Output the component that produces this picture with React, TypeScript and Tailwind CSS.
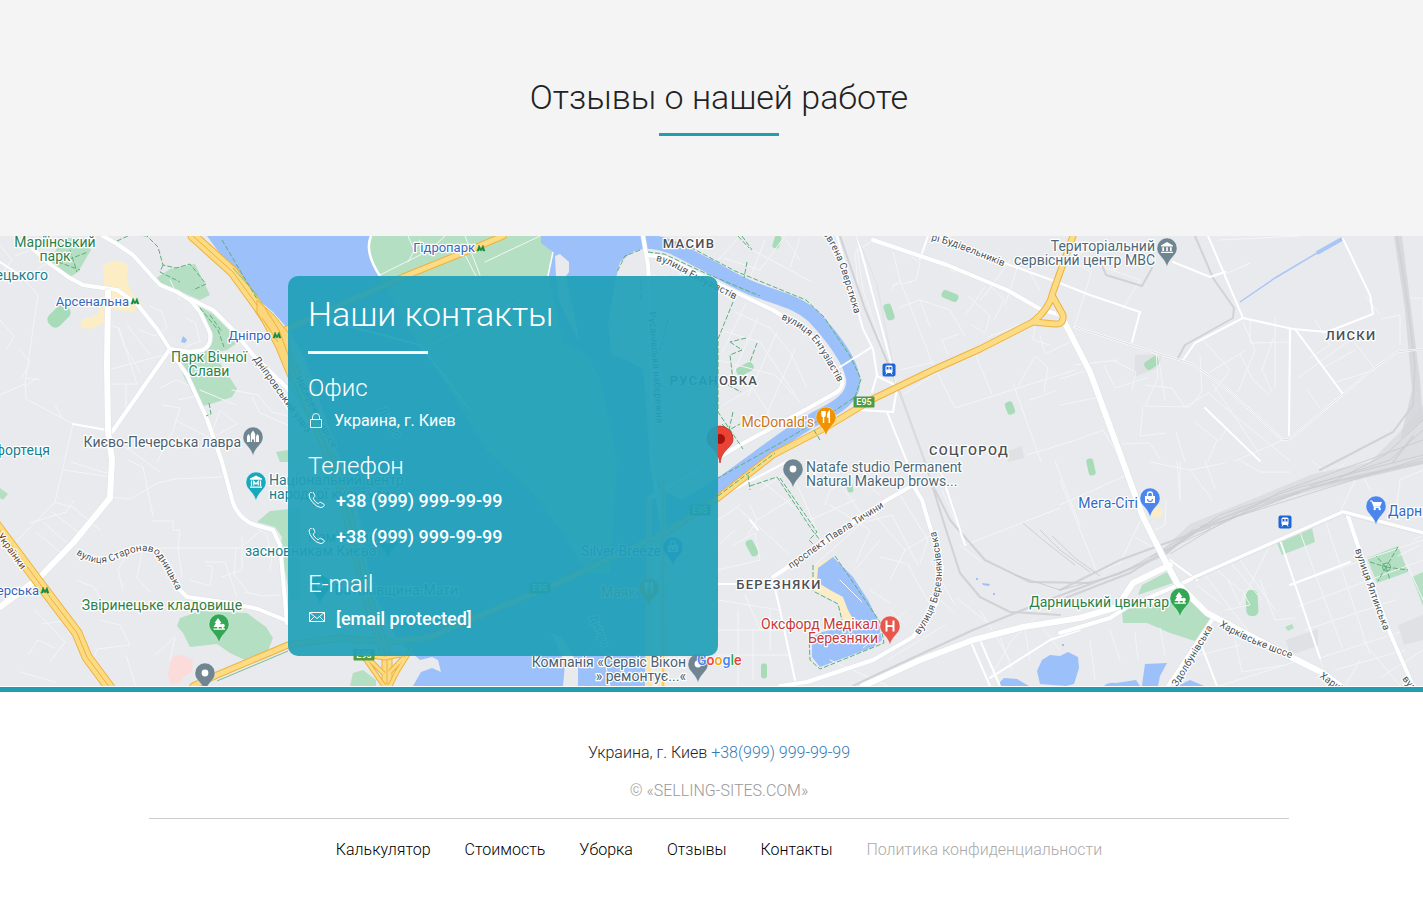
import type { ReactNode } from "react";

type Point = { x: number; y: number };

const water = [
  "M207 236L232 270L257 299L273 312L288 329L304 356L330 430L358 510L372 590L398 640L420 660L432 657L438 660L441 672L432 668L421 672L413 686H563L565 664L553 636L549 632L562 638L578 664L578 686H645L646 600L650 545L664 528L718 498L718 484L682 500L662 490L650 462L643 369L627 360L612 355L608 325L615 282L620 262L632 252L643 249L648 236Z",
];

const parks = [
  "M371 236Q364 252 380 276L408 329L428 355L465 415L485 449L533 493L563 533L587 573L610 573L617 460L607 412L600 379L587 355L563 342L548 275L553 252L541 243L541 236Z",
  "M50 262L62 238H84L91 250L78 272L70 277Z",
  "M155 279L170 269L195 264L210 295L200 300L177 290L160 285Z",
  "M197 305L213 314L240 341L227 350L213 353L230 378L237 389L232 397L217 402L200 407L183 375L177 358L200 352L211 341Z",
  "M180 618L200 611L247 613L266 627L273 638L267 653L247 661L230 653L217 644L190 647L183 633L177 626Z",
  "M257 522L270 511L300 508V600H290L286 575L280 550L282 537L275 527Z",
  "M350 686L353 673L363 670L376 680V686Z",
  "M276 452L288 450V462H280Z",
  "M0 488L8 494L3 500L0 498Z",
  "M1122 610L1167 602L1190 600L1213 615L1198 642L1170 633L1147 623L1123 623Z",
  "M1142 585L1167 572L1173 583L1138 595Z",
  "M1277 543L1312 528L1315 542L1282 555Z",
  "M1367 558L1398 546L1408 572L1377 583Z",
  "M1412 577L1423 572V606Z",
  "M1285 627L1292 624L1294 628L1288 631Z",
];

const pills: { x: number; y: number; w: number; h: number; r: number }[] = [
  { x: 59, y: 316, w: 25, h: 15, r: -45 },
  { x: 777, y: 242, w: 7, h: 13, r: 18 },
  { x: 889, y: 312, w: 8, h: 17, r: -18 },
  { x: 950, y: 296, w: 17, h: 8, r: 22 },
  { x: 1010, y: 408, w: 8, h: 13, r: -20 },
  { x: 1152, y: 363, w: 16, h: 9, r: -35 },
  { x: 1091, y: 467, w: 7, h: 17, r: -12 },
  { x: 1252, y: 603, w: 12, h: 26, r: -3 },
  { x: 745, y: 369, w: 18, h: 9, r: -28 },
  { x: 752, y: 548, w: 8, h: 17, r: -28 },
  { x: 764, y: 671, w: 6, h: 15, r: 0 },
  { x: 850, y: 488, w: 6, h: 9, r: -10 },
];

const ponds = [
  "M833 557L818 568L817 582L830 590L843 597L848 610L855 623L840 628L822 632L812 637L812 657L820 667L873 647L882 640L878 620L868 600L853 577Z",
  "M1037 671L1042 660L1050 655L1060 656L1068 652L1078 657L1079 668L1074 684L1066 686L1040 684Z",
  "M1000 682L1004 678L1017 679L1029 686H1000Z",
  "M1143 678L1145 664L1167 663L1160 676L1158 686H1142Z",
  "M1104 686Q1108 682 1116 683L1136 680L1140 686Z",
  "M1177 686L1190 680L1204 686Z",
  "M976 578h2v2h-2zM982 583l8 1-1 2-6-1zM993 593h2v2h-2zM1062 644h2v2h-2zM183 336l4 4-2 3-4-1z",
];

const beigeAreas = [
  "M103 265L117 260L128 265L127 282L133 295L143 304L133 312L110 309L107 322L90 329L80 327L82 320L97 315L103 299L104 282Z",
  "M833 557L815 566L813 590L838 602L842 618L848 624L857 622L848 597L830 585L818 575Z",
  "M1150 508L1162 508V516L1152 518Z",
];

const blocks = [
  "M1135 355L1162 354L1158 368L1134 377Z",
  "M1286 640L1318 629L1318 646L1290 655Z",
  "M1398 625L1423 615V640L1404 645Z",
  "M1005 452L1022 446L1024 458L1008 462Z",
];

const canal =
  "M641 242C670 240 690 258 707 265C724 274 742 286 762 292C780 299 797 302 813 316C831 335 850 360 853 378C855 392 846 403 824 414C790 431 755 461 718 486L675 512";

const minorStreets = [
  "M0 262L20 275L38 295L25 384L0 395M25 384L26 399L73 424L107 430M73 424L55 502L13 545M107 384H137L119 328L109 325M108 370L167 354M126 384V407M0 320L14 336L6 350",
  "M0 245L12 260L0 276M15 256L33 249M38 268L50 262M20 350L30 362L22 378M25 378L40 380M26 386L36 378M55 405L62 418M118 328L124 345L140 372M127 325L150 355",
  "M139 330L155 336L167 328L162 312L150 306M170 280L180 300M186 318L195 322L200 341L185 347M160 388L176 380L190 386M162 405L180 408L173 431L157 462M178 400L196 396L200 405",
  "M63 470L112 477M71 462L112 475M55 502L74 508L100 530M74 500L66 512L30 523M36 532L60 552M44 523L67 543M52 512L82 535M112 497L130 499L158 483L175 479L222 477",
  "M128 460L143 467L153 516M153 521H173V530H180L178 548L182 577M150 548L240 548L264 528M190 580L210 586L213 567L207 565M205 562L225 562L237 597M236 548L234 575L250 594",
  "M242 518L266 534L272 555L270 570M280 595L262 596L245 592M242 537V570L222 577M130 548L118 570L123 590M142 552L137 578L150 592M76 580L94 587L105 608",
  "M35 610L65 642L50 662M20 672L55 682M28 655L38 640L55 648M100 620L120 625L130 645L97 649L92 665M126 655L137 690M155 655L175 637L170 660M42 624L64 621L70 635",
  "M175 420L210 438L220 410L237 424L215 436M232 390L258 395L272 412L288 416M252 397L260 413L288 425M200 390L236 405M0 452L28 459M110 440L130 450L160 472",
  "M652 275L718 292M655 295L718 310M656 325L718 335M655 345L718 352M655 400L718 395M665 275V480M680 270V484M697 278V480M652 450H718",
  "M735 312L770 328L790 352L806 386M720 330L760 342L795 395M718 360L775 375L800 402M723 405L753 388L770 415M745 305L722 353M758 318L732 376M777 332L748 396M795 350L765 418",
  "M724 258L760 270L785 236M740 236L718 260M765 240L750 278M786 240L800 260M745 246L812 282M800 238L790 268",
  "M857 248L863 290L885 355M874 240L855 252L858 285M893 252L900 280L935 370M900 280L890 290M893 285L912 282M899 308L920 300L930 327M910 255L920 263L916 280L908 282M920 300L950 310L965 336",
  "M900 370L934 362M904 394L937 372L955 408L1075 370M1013 383L1041 462M975 353L992 394M1018 386L1035 356L1048 367L1044 392M965 315L985 287M948 355L942 340L959 334M985 280L1004 300L994 320",
  "M968 296L990 316L985 333L972 325M950 270L995 283L980 300M1010 260L985 295M1018 265L1005 305M988 337L1028 322M1030 273L1040 290M1017 266L1045 278M1037 312L1033 340L1050 345",
  "M1027 455L1076 440L1103 430L1123 462M1030 400L1055 391M1040 335L1045 354L1070 342M1075 365L1118 360M1060 379L1092 369M1060 405L1100 397M1104 365L1115 388L1147 378M1113 360L1136 372L1132 390",
  "M1092 270L1075 325M1100 266L1140 280L1122 310M1090 242L1075 262L1090 272M1156 352L1158 378L1145 406L1190 407L1202 391L1200 355M1143 407L1140 436L1165 433M1145 385L1172 388L1185 407L1210 392",
  "M1158 354L1165 400M1210 395L1290 461M1283 440L1235 461M1213 384L1260 455M1196 423L1217 440L1208 461M1205 408L1227 428L1220 440M1176 432L1185 462M1123 444L1150 443L1160 459",
  "M1243 322L1255 350L1238 392M1250 318V343L1290 342M1203 340L1230 370L1214 392M1240 354L1253 380L1270 395M1273 339L1262 370L1272 392M1245 351L1210 372M1275 388L1275 318",
  "M1310 358L1330 345M1298 378L1350 340M1323 368L1355 350M1333 383L1375 370M1307 390L1320 408M1355 343L1375 369M1315 320L1330 345M1381 319L1400 315V345M1410 298H1423V320",
  "M1220 240L1300 236M1225 274L1250 263L1240 268M1365 296L1380 314M1150 462L1190 470L1225 463M1240 460L1260 472H1290M1312 461L1330 475L1345 463M1060 505L1127 475M1177 461L1180 500",
  "M1060 480L1097 572L1120 563L1143 515M1135 537L1162 553M1166 500L1165 525L1155 530M1180 462V500M1205 461L1215 488M1190 470L1212 500",
  "M750 505L757 520L748 535M760 490L790 470L804 500L825 550M757 520L790 500M733 545L755 533L760 560M738 508L790 555M748 470L810 520L855 500M825 505L830 490L855 475L880 495",
  "M830 505L870 530L856 562M845 490L865 520L815 565M870 510L905 550L890 580M905 550L940 530M913 485L900 495L928 540L920 563M907 563L930 605M880 540L855 570M905 563L880 557M865 522L892 515L918 565",
  "M718 520L740 505M718 545L735 530M718 570L760 560M718 600L780 610M738 610V686M718 630H782M718 655H788M753 630V680M770 610V650M745 595L760 630",
  "M942 490L965 545L1060 508M960 545L982 562M1055 461L1080 525M930 560L955 605M940 600L953 612M957 598L990 625M980 610L1010 660M1025 630L1030 660M1000 637L1012 670M1040 625L1060 650",
  "M990 678L1012 640L1035 618M888 660L945 625M863 648L905 612M840 580L862 602M870 590L890 603M890 610L906 625M830 660L888 686",
  "M1280 540L1323 668M1300 532L1342 647M1325 520L1370 655M1290 585L1423 540M1297 607L1423 560M1305 630L1395 600M1320 658L1400 632M1335 670L1405 650",
  "M1205 575L1255 640M1230 562L1262 600M1217 570L1240 590M1240 560L1275 610M1270 545L1240 605L1228 580M1225 610L1250 605L1242 590M1197 585L1220 603M1260 580L1275 620L1295 618",
  "M1340 512L1360 470L1370 490M1395 520L1400 480L1423 470M1405 560L1423 600M1413 540L1423 535M1362 640L1400 686M1380 678L1423 650M1360 660L1345 686M1220 686L1300 660",
  "M1160 628L1165 655M1090 640L1095 680M1110 630L1120 660M1135 633L1138 660M1200 655L1240 645M1235 640L1242 672L1285 665M1420 545L1398 556",
  "M380 275L430 250L445 236M408 262L420 240M408 236L415 252M465 236L480 275M485 262L540 236M463 251L478 280M610 686L605 662M520 300L480 320L430 345",
];

const midStreets = [
  "M0 262L20 275M73 424L107 430M325 320L420 345L470 410M837 236L863 329L873 349L877 375L872 392M857 236L897 385M872 347L840 367",
  "M937 236L1007 264L1057 282L1090 295L1140 312L1132 342M928 236L920 259M1208 236L1243 318L1293 329L1327 332L1373 314L1370 295L1343 239M1243 318L1195 343L1183 360",
  "M1290 329L1289 435M1295 329L1343 394M1075 327L1160 354L1193 364L1227 389L1283 440L1290 439L1373 369L1397 352L1423 349M1173 262L1210 277L1225 272",
  "M773 580L780 610L795 680M887 412L907 462L913 485M860 410L893 412M877 376L893 384M893 412L897 388M942 475L965 545M718 584H740M1202 647L1217 686M970 640L990 686M980 640L1000 686",
  "M990 678L1050 640L1080 630M1347 513L1423 533M1342 513L1280 540L1193 578M1197 580L1170 560M718 498L790 460M750 520L758 530",
  "M1280 540L1320 658M1290 585L1350 562M1205 408L1260 461",
];

const majorRoads = [
  "M33 249L50 264L68 277L83 285L117 290L137 304L157 329L170 349L190 352L203 350Q212 345 210 333L200 312L190 300L177 292L160 285L150 274L133 255L117 244L103 236",
  "M190 299L213 310L233 330L253 355L288 389L325 450",
  "M170 350L187 375L207 419L222 462L233 503Q240 520 255 525L273 530L280 545L287 623",
  "M170 349L112 432",
  "M643 236L648 265L650 299L652 462L665 540L662 686",
  "M647 255L665 257L700 275L760 304L773 310L807 332L827 355L842 377Q844 387 837 392L807 409L740 445L650 498",
  "M177 587L187 597L230 603L258 609L290 622",
  "M773 577L813 550L887 500L913 485L922 500L930 527L942 567L937 603L913 637L873 660L807 682L780 686",
  "M873 240L947 265L1007 290L1040 309L1060 315",
  "M1060 633L1110 618L1127 607L1183 583L1193 578L1343 512L1423 533",
  "M1347 513L1357 543L1390 633L1413 686",
  "M1212 620L1168 686",
];

const trunkRoads = [
  "M108 292L107 365L108 432L112 460L110 498L73 543L40 577L0 607",
  "M1060 313L1073 339L1090 372L1123 462L1143 517L1163 557L1177 583L1207 613L1220 620L1293 658L1323 673L1340 686",
  "M1170 565L1133 583L1117 607L1080 618L1023 627L973 640L920 660L863 686",
];

const highways = [
  "M1073 236L1053 292Q1050 308 1033 322L980 349L933 370L873 399L823 429L773 455L718 498L667 532L600 563L550 587L500 607L430 637L388 642L340 638L288 645L217 675L193 686",
  "M1053 297L1063 315Q1064 325 1055 324L1033 322",
  "M503 236L465 252L408 275L340 305L285 330",
];

const wideHighways = [
  "M193 236L233 272L257 305L273 329L295 373L340 480L365 590L387 660L387 686",
  "M-4 525L37 580L77 633L87 657L110 688",
];

const railways = [
  "M840 236L865 309L897 385L925 462L947 533L960 573L980 597L1010 612L1060 615",
  "M930 480L950 520L985 560L1030 582L1093 583",
  "M853 686L880 673L973 630L1030 607L1093 583L1127 570L1167 553L1193 530L1260 503L1313 487L1423 463",
  "M1060 590L1120 560L1210 527M1060 600L1130 573L1200 530L1300 492M1397 236L1407 299L1415 365L1413 405L1393 432L1320 470",
  "M1195 236L1213 278L1234 308L1233 318L1185 345L1178 358M1102 265L1106 275L1142 286L1152 268M1413 436L1393 462",
];

const trails = [
  "M117 241L130 235L147 236L158 247L163 265L176 268L190 264L206 284L193 290M163 265L160 272L180 282M58 262L80 270M70 250L77 272M62 262L88 252",
  "M200 308L218 330L224 347M210 315L222 332M209 403L211 414L206 416M222 240L257 299",
  "M640 250L625 256L617 272M648 252L664 254L705 273L760 296M664 239L690 247L735 271L806 300L824 317L850 356L861 379L855 397L836 410L775 446L718 478",
  "M733 302L718 339V412L743 449M730 342L742 350L730 355L733 380M746 338L730 342M728 385L741 392M757 343L750 362M733 412L729 430L740 424M722 424L733 436",
  "M750 486L777 477L812 530L820 540M780 478L817 532L809 540L815 546M718 496L775 453M748 475L750 490",
  "M835 556L848 575L880 622L884 643L820 669L810 660L809 637M813 565V591L838 604L842 620M738 236L749 248M747 262L744 278M742 236L752 250M814 430L820 440",
  "M1370 562L1386 567L1398 547M1386 567L1378 581M1386 567L1408 570M1386 567L1390 580M1386 567L1376 556",
  "M641 280V300M668 320L660 350",
];

type Label = Point & {
  text: string;
  tone: string;
  end?: boolean;
  middle?: boolean;
};

const transitLabels: Label[] = [
  { text: "Арсенальна", x: 129, y: 306, tone: "fill-[#3468bd]", end: true },
  { text: "Дніпро", x: 271, y: 340, tone: "fill-[#3468bd]", end: true },
  { text: "Гідропарк", x: 475, y: 252, tone: "fill-[#3468bd]", end: true },
  { text: "ерська", x: 39, y: 595, tone: "fill-[#3468bd]", end: true },
];

const labels: Label[] = [
  { text: "Маріїнський", x: 55, y: 247, tone: "fill-[#2b8149]", middle: true },
  { text: "парк", x: 55, y: 261, tone: "fill-[#2b8149]", middle: true },
  { text: "ецького", x: 48, y: 280, tone: "fill-[#15808f]", end: true },
  { text: "Парк Вічної", x: 209, y: 362, tone: "fill-[#2b8149]", middle: true },
  { text: "Слави", x: 209, y: 376, tone: "fill-[#2b8149]", middle: true },
  { text: "Києво-Печерська лавра", x: 241, y: 447, tone: "fill-[#4d6170]", end: true },
  { text: "фортеця", x: 50, y: 455, tone: "fill-[#15808f]", end: true },
  { text: "Національний центр", x: 269, y: 485, tone: "fill-[#15808f]" },
  { text: "народної культури", x: 269, y: 499, tone: "fill-[#15808f]" },
  { text: "Пам'ятник", x: 308, y: 542, tone: "fill-[#15808f]" },
  { text: "засновникам Києва", x: 245, y: 556, tone: "fill-[#15808f]" },
  { text: "Батьківщина-Мати", x: 458, y: 595, tone: "fill-[#15808f]", end: true },
  { text: "Звіринецьке кладовище", x: 162, y: 610, tone: "fill-[#2b8149]", middle: true },
  { text: "Silver Breeze", x: 661, y: 556, tone: "fill-[#3468bd]", end: true },
  { text: "Маяк", x: 636, y: 597, tone: "fill-[#c26c12]", end: true },
  { text: "Компанія «Сервіс Вікон", x: 686, y: 667, tone: "fill-[#4d6170]", end: true },
  { text: "» ремонтує...«", x: 686, y: 681, tone: "fill-[#4d6170]", end: true },
  { text: "McDonald's", x: 814, y: 427, tone: "fill-[#c8751d]", end: true },
  { text: "Natafe studio Permanent", x: 806, y: 472, tone: "fill-[#4d6978]" },
  { text: "Natural Makeup brows...", x: 806, y: 486, tone: "fill-[#4d6978]" },
  { text: "Територіальний", x: 1155, y: 251, tone: "fill-[#4d6978]", end: true },
  { text: "сервісний центр МВС", x: 1155, y: 265, tone: "fill-[#4d6978]", end: true },
  { text: "Мега-Сіті", x: 1138, y: 508, tone: "fill-[#3569c4]", end: true },
  { text: "Дарниця", x: 1388, y: 516, tone: "fill-[#3569c4]" },
  { text: "Оксфорд Медікал", x: 878, y: 629, tone: "fill-[#c53a3a]", end: true },
  { text: "Березняки", x: 878, y: 643, tone: "fill-[#c53a3a]", end: true },
  { text: "Дарницький цвинтар", x: 1169, y: 607, tone: "fill-[#2b8149]", end: true },
];

const districts: (Point & { text: string })[] = [
  { text: "МАСИВ", x: 689, y: 248 },
  { text: "РУСАНОВКА", x: 714, y: 385 },
  { text: "СОЦГОРОД", x: 969, y: 455 },
  { text: "БЕРЕЗНЯКИ", x: 779, y: 589 },
  { text: "ЛИСКИ", x: 1351, y: 340 },
];

const streetNames: { id: string; text: string; d: string; tone?: string }[] = [
  { id: "entuziastiv-north", text: "вулиця Ентузіастів", d: "M656 261Q668 263 690 277L750 307" },
  { id: "entuziastiv-east", text: "вулиця Ентузіастів", d: "M781 319Q806 329 817 346L850 402" },
  { id: "sverstiuka", text: "Євгена Сверстюка", d: "M822 233Q835 250 842 273L861 335" },
  { id: "budivelnykiv", text: "рі Будівельників", d: "M931 240L950 245L1025 275" },
  { id: "tychyny", text: "проспект Павла Тичини", d: "M791 569L835 538L900 497" },
  { id: "berezniakivska", text: "вулиця Березняківська", d: "M919 635Q942 605 942 570Q940 545 932 515" },
  { id: "staronavodnytska", text: "вулиця Старонаводницька", d: "M76 554Q95 568 115 560Q145 545 156 555Q166 568 182 602" },
  { id: "ukrainky", text: "Українки", d: "M-3 536L40 596", tone: "fill-[#6b4226]" },
  { id: "dniprovskyi", text: "Дніпровський узвіз", d: "M253 359L340 481" },
  { id: "naberezhne", text: "Набережне шосе", d: "M295 378L346 476" },
  { id: "rusanivska", text: "Русанівська набережна", d: "M649 312L658 440" },
  { id: "yaltynska", text: "вулиця Ялтинська", d: "M1355 550Q1364 578 1388 642" },
  { id: "kharkivske", text: "Харківське шосе", d: "M1219 626Q1245 643 1305 663" },
  { id: "kharkivske-south", text: "Харківське шосе", d: "M1319 677L1390 729" },
  { id: "yaltynska-south", text: "вулиця", d: "M1402 679L1430 715" },
  { id: "zdolbunivska", text: "Здолбунівська", d: "M1177 687L1222 613" },
  { id: "dnipro-river-north", text: "Дніпро", d: "M379 410L403 450", tone: "fill-[#3a66b0]" },
  { id: "dnipro-river-south", text: "Дніпро", d: "M590 617L610 664", tone: "fill-[#3a66b0]" },
];

function Pin({ x, y, fill, children }: Point & { fill: string; children?: ReactNode }) {
  return (
    <g transform={`translate(${x} ${y})`}>
      <path
        d="M0 19C-1.500 13-4.500 10.500-7.500 6.800C-9.200 4.700-10 2.500-10 0A10 10 0 1 1 10 0C10 2.500 9.200 4.700 7.500 6.800C4.500 10.500 1.500 13 0 19Z"
        className={`${fill} stroke-white/60`}
        strokeWidth=".6"
      />
      {children ?? <circle r="3.400" className="fill-white" />}
    </g>
  );
}

const Tree = () => (
  <g className="fill-white">
    <path d="M-1-6L-4.500-1H-3L-5.500 3H-1.700V5H-.3V3H3.300L1-1H2.500Z" />
    <path d="M3 5V3.500A2 2 0 1 1 4.500 3.500V5ZM-5.500 4.500H6V5.700H-5.500Z" />
  </g>
);
const Fork = () => (
  <g className="stroke-white" strokeWidth="1.500" fill="none">
    <path d="M-4-6V-2Q-4-.5-2.500-.5T-1-2V-6M-2.500-6V6M3.300 6V-5.500Q1.500-4 1.700 0H3.300" />
  </g>
);
const Bank = () => (
  <g className="fill-white">
    <path d="M0-6L6-2.500V-1.500H-6V-2.500ZM-4.700-.7h1.700v3.700h-1.700zM-.8-.7H.8V3H-.8zM3-.7h1.700v3.700H3zM-6 3.700H6V5H-6Z" />
  </g>
);
const Museum = () => (
  <g className="fill-white">
    <path d="M0-6.500L6-3.500V-2.300H-6V-3.500ZM-6 4.500H6V5.700H-6Z" />
    <path d="M-4.500-1.500V4M4.500-1.500V4M-2.200 3.500V-.5L0 2L2.200-.5V3.500" fill="none" className="stroke-white" strokeWidth="1.300" />
  </g>
);
const Bag = () => (
  <g>
    <path d="M-5-2H5V5H-5Z" className="fill-white" />
    <path d="M-2.500-2V-3.500A2.500 2.500 0 0 1 2.500-3.500V-2" fill="none" className="stroke-white" strokeWidth="1.300" />
    <path d="M-2.500 1A2.500 2.500 0 0 0 2.500 1" fill="none" className="stroke-[#4a86ee]" strokeWidth="1.200" />
  </g>
);
const Cart = () => (
  <g>
    <path d="M-6-5H-4L-1.500 1.500H4" fill="none" className="stroke-white" strokeWidth="1.200" />
    <path d="M-3.700-4H6L4 .8H-2ZM-2.500 3a1.200 1.200 0 1 0 2.400 0 1.200 1.200 0 1 0-2.400 0M2.500 3a1.200 1.200 0 1 0 2.400 0 1.200 1.200 0 1 0-2.400 0" className="fill-white" />
  </g>
);
const Domes = () => (
  <path d="M-6 5V0Q-6-1.500-4.500-3Q-3-1.500-3 0V5ZM-2.200 5V-2.500Q-2-4 0-6.500Q2-4 2.200-2.500V5H1V2.500H-1V5ZM3 5V0Q3-1.500 4.500-3Q6-1.500 6 0V5Z" className="fill-white" />
);

function Metro({ x, y }: Point) {
  return <path transform={`translate(${x} ${y})`} d="M-4 3L-2-3L0 1L2-3L4 3H2L1.500 1L0 3.200L-1.500 1L-2 3Z" className="fill-[#138a43] stroke-[#138a43]" strokeWidth=".4" />;
}

function Station({ x, y }: Point) {
  return (
    <g transform={`translate(${x} ${y})`}>
      <rect x="-6.500" y="-6.500" width="13" height="13" rx="2" className="fill-[#1f66d6]" />
      <rect x="-3.500" y="-4.500" width="7" height="7.500" rx="1.500" className="fill-white" />
      <path d="M-2.500-3H-.5V-.5H-2.500ZM.5-3H2.500V-.5H.5Z" className="fill-[#1f66d6]" />
      <path d="M-2 3L-3.200 4.500M2 3L3.200 4.500" className="stroke-white" />
    </g>
  );
}

function Shield({ x, y }: Point) {
  return (
    <g transform={`translate(${x} ${y})`}>
      <rect x="-10.500" y="-5.500" width="21" height="11" rx="1" className="fill-[#4f9b3d]" />
      <text y="3" textAnchor="middle" className="fill-white text-[9px] font-medium">E95</text>
    </g>
  );
}

function Roads({ paths, className, width }: { paths: string[]; className: string; width: number }) {
  return (
    <g fill="none" strokeLinejoin="round" strokeLinecap="round" className={className} strokeWidth={width}>
      {paths.map((d) => (
        <path key={d} d={d} />
      ))}
    </g>
  );
}

function MapLabel({ label, size }: { label: Label; size: string }) {
  return (
    <text x={label.x} y={label.y} textAnchor={label.end ? "end" : label.middle ? "middle" : "start"} className={`${size} ${label.tone}`}>
      {label.text}
    </text>
  );
}

function CityMap() {
  return (
    <svg
      viewBox="0 236 1423 450"
      preserveAspectRatio="xMidYMid slice"
      role="img"
      aria-label="Карта"
      className="col-start-1 row-start-1 h-[450px] w-full bg-[#e8eaed]"
    >
      <g className="fill-[#dfe1e5]">{blocks.map((d) => <path key={d} d={d} />)}</g>
      <g className="fill-[#9cc0f9]">{water.map((d) => <path key={d} d={d} />)}</g>
      <path d="M555 256L560 254L569 262L569 272L566 276L572 305L580 342L570 325L559 300L556 278Z" className="fill-[#e8eaed]" />
      <path d={canal} fill="none" className="stroke-[#9cc0f9]" strokeWidth="14" />
      <g className="fill-[#b5dfc3]">
        {parks.map((d) => <path key={d} d={d} />)}
      </g>
      <path d="M371 236Q364 252 380 276" fill="none" className="stroke-white" strokeWidth="2.500" />
      <path d="M553 252L548 276" fill="none" className="stroke-white" strokeWidth="1.500" />
      <g className="fill-[#a8dbb8]">
        {pills.map((p) => (
          <rect key={`${p.x}-${p.y}`} x={p.x - p.w / 2} y={p.y - p.h / 2} width={p.w} height={p.h} rx={Math.min(p.w, p.h) / 2.5} transform={`rotate(${p.r} ${p.x} ${p.y})`} />
        ))}
      </g>
      <g className="fill-[#fdedc4]">{beigeAreas.map((d) => <path key={d} d={d} />)}</g>
      <path d="M170 663L174 656L182 655L193 660L192 672L183 677L180 683L170 684L168 674Z" className="fill-[#fbdcdb]" />
      <g className="fill-[#9cc0f9]">{ponds.map((d) => <path key={d} d={d} />)}</g>
      <path d="M1240 302L1275 278L1317 253L1342 239" fill="none" className="stroke-[#a8c7f7]" strokeWidth="1.500" />
      <path d="M1317 253L1342 239" className="stroke-[#a8c7f7]" strokeWidth="4" />

      <Roads paths={minorStreets} className="stroke-[#f4f5f7]" width={1} />
      <path d="M1060 603L1127 572L1162 550L1190 524L1260 496L1313 474L1370 462L1400 432L1423 405V464L1340 484L1260 504L1195 532L1165 556L1095 586Z" className="fill-[#d3d5d9]/60" />
      <path d="M1394 236H1402L1410 300L1420 380L1423 420L1400 440L1412 390L1405 310Z" className="fill-[#d3d5d9]/80" />
      <Roads paths={railways} className="stroke-[#d0d2d6]" width={2} />
      <g fill="none" className="stroke-[#c6c9cd]" strokeWidth=".8">
        <path d="M1167 551L1220 515L1300 487L1423 455M1170 554L1240 512L1330 482L1423 461M1120 574L1200 528L1423 458M1150 557L1230 520L1280 492L1340 470L1423 440M1330 483L1385 455L1423 420M1310 486L1390 460L1423 430" />
        <path d="M1023 523L1043 540L1075 565M1040 530L1060 550L1090 572M1052 536L1075 558L1100 576M1015 575L1060 590L1120 574" />
      </g>
      <Roads paths={midStreets} className="stroke-white" width={2} />
      <Roads paths={majorRoads} className="stroke-[#dfe1e5]" width={5} />
      <Roads paths={majorRoads} className="stroke-white" width={4} />
      <Roads paths={trunkRoads} className="stroke-[#dfe1e5]" width={7} />
      <Roads paths={trunkRoads} className="stroke-white" width={6} />
      <path d="M1075 327L1160 354L1193 364L1227 389L1283 440L1290 439L1373 369L1397 352L1423 349" fill="none" className="stroke-[#cfd2d6]" strokeWidth=".8" />
      <g fill="none" className="stroke-[#dfe1e5]" strokeWidth="1">
        <path d="M1193 580L1343 514L1423 535M1193 529L1200 527M857 236L877 285L897 385L935 490" />
      </g>

      <Roads paths={highways} className="stroke-[#f0b13c]" width={7} />
      <Roads paths={wideHighways} className="stroke-[#f0b13c]" width={11} />
      <Roads paths={highways} className="stroke-[#fbdc84]" width={5} />
      <Roads paths={wideHighways} className="stroke-[#fbdc84]" width={9} />
      <Roads paths={wideHighways} className="stroke-[#f0b13c]" width={1} />
      <g fill="none" strokeLinejoin="round">
        <path d="M257 300L274 315L290 335V382L276 348L257 312Z" className="fill-[#fbd67a] stroke-[#f0b13c]" />
        <path d="M265 308L279 330L290 360M262 318L278 342" className="stroke-[#f0b13c]" />
        <path d="M352 648L366 660L384 686H390L397 672L412 648M372 656L385 658L400 655M368 658L384 674M404 657L390 672" className="stroke-[#f0b13c]" strokeWidth="5" />
        <path d="M352 648L366 660L384 686H390L397 672L412 648M372 656L385 658L400 655M368 658L384 674M404 657L390 672" className="stroke-[#fbdc84]" strokeWidth="3" />
        <path d="M649 500V686M663 480V686" className="stroke-[#fbe3a0]" strokeWidth="5" />
        <path d="M663 480V686" className="stroke-[#f0b13c]" />
      </g>
      <g fill="none" className="stroke-[#5fae7b]" strokeWidth="1" strokeDasharray="5 2">
        {trails.map((d) => <path key={d} d={d} />)}
      </g>
      <path d="M217 681L288 651M233 268L257 295" fill="none" className="stroke-[#7fbb8f]" />
      <circle cx="1386.500" cy="567" r="4" fill="none" className="stroke-[#5fae7b]" />

      <g className="stroke-white font-normal [paint-order:stroke]" strokeWidth="2.500" strokeLinejoin="round">
        {streetNames.map((s) => (
          <g key={s.id}>
            <path id={s.id} d={s.d} fill="none" stroke="none" />
            <text className={`text-[10px] ${s.tone ?? "fill-[#4a4e53]"}`}>
              <textPath href={`#${s.id}`}>{s.text}</textPath>
            </text>
          </g>
        ))}
        {labels.map((l) => <MapLabel key={l.text} label={l} size="text-[14px]" />)}
        {transitLabels.map((l) => <MapLabel key={l.text} label={l} size="text-[13px]" />)}
        {districts.map((d) => (
          <text key={d.text} x={d.x} y={d.y} textAnchor="middle" className="fill-[#4c5055] text-[13px] font-medium tracking-widest">
            {d.text}
          </text>
        ))}
      </g>

      <Metro x={135} y={301} />
      <Metro x={277} y={335} />
      <Metro x={481} y={248} />
      <Metro x={45} y={590} />
      <Station x={889} y={370} />
      <Station x={1285} y={522} />
      <Shield x={864} y={402} />
      <Shield x={540} y={588} />
      <Shield x={700} y={510} />
      <Shield x={364} y={655} />

      <Pin x={253} y={437} fill="fill-[#6f8592]"><Domes /></Pin>
      <Pin x={256} y={482} fill="fill-[#16a9bd]"><Museum /></Pin>
      <Pin x={388} y={540} fill="fill-[#16a9bd]" />
      <Pin x={320} y={585} fill="fill-[#16a9bd]" />
      <Pin x={219} y={624} fill="fill-[#33a754]"><Tree /></Pin>
      <Pin x={205} y={673} fill="fill-[#6f8592]" />
      <Pin x={673} y={547} fill="fill-[#4a86ee]"><Bag /></Pin>
      <Pin x={649} y={588} fill="fill-[#f09300]"><Fork /></Pin>
      <Pin x={698} y={664} fill="fill-[#6f8592]" />
      <Pin x={826} y={417} fill="fill-[#f09300]"><Fork /></Pin>
      <Pin x={793} y={469} fill="fill-[#6f8592]" />
      <Pin x={1167} y={248} fill="fill-[#6f8592]"><Bank /></Pin>
      <Pin x={1150} y={498} fill="fill-[#4a86ee]"><Bag /></Pin>
      <Pin x={1376} y={506} fill="fill-[#4a86ee]"><Cart /></Pin>
      <Pin x={890} y={626} fill="fill-[#e9564b]">
        <path d="M-3.500-5.500V5.500M3.500-5.500V5.500M-3.500 0H3.500" className="stroke-white" strokeWidth="2" />
      </Pin>
      <Pin x={1180} y={598} fill="fill-[#33a754]"><Tree /></Pin>

      <path d="M720 463C719 455 715 451 711 447C708.500 444.500 707 442 707 439A13 13 0 1 1 733 439C733 442 731.500 444.500 729 447C725 451 721 455 720 463Z" className="fill-[#ea4335] stroke-[#b8322a]" strokeWidth=".8" />
      <circle cx="720" cy="439" r="5" className="fill-[#a3120c]" />

      <text x="697" y="665" className="stroke-white text-[14px] font-medium [paint-order:stroke]" strokeWidth="1.500">
        <tspan className="fill-[#4285f4]">G</tspan>
        <tspan className="fill-[#ea4335]">o</tspan>
        <tspan className="fill-[#f2a600]">o</tspan>
        <tspan className="fill-[#4285f4]">g</tspan>
        <tspan className="fill-[#34a853]">l</tspan>
        <tspan className="fill-[#ea4335]">e</tspan>
      </text>
    </svg>
  );
}

function LockIcon() {
  return (
    <svg viewBox="0 0 18 18" className="size-[18px] shrink-0" fill="none" stroke="currentColor" strokeOpacity=".85" aria-hidden="true">
      <path d="M2.500 7.500H13.500V15.500H2.500ZM4.500 7.500V5A3.500 3.500 0 0 1 11.500 5V7.500" />
    </svg>
  );
}

function PhoneIcon() {
  return (
    <svg viewBox="0 0 18 18" className="size-[18px] shrink-0" fill="none" stroke="currentColor" strokeLinejoin="round" aria-hidden="true">
      <path d="M2.200 .7L4.200-.2Q5-.4 5.400 .4L6.900 3.800Q7.100 4.500 6.500 5L5.200 6Q5.600 7.700 7.200 9.400T10.300 11.700L11.600 10.500Q12.200 10 12.900 10.400L15.900 12.200Q16.500 12.700 16.200 13.400Q15 15.700 13 15.600Q8.900 15.200 4.900 10.700Q1.300 6.600 1.100 3Q1.100 1.500 2.200 .7Z" />
    </svg>
  );
}

function MailIcon() {
  return (
    <svg viewBox="0 0 18 18" className="size-[18px] shrink-0" fill="none" stroke="currentColor" aria-hidden="true">
      <path d="M1.500 2.500H16.500V11.500H1.500ZM1.500 2.500L9 8.500L16.500 2.500M1.500 11.500L6.500 6.500M16.500 11.500L11.500 6.500" />
    </svg>
  );
}

function ContactGroup({ title, children }: { title: string; children: ReactNode }) {
  return (
    <section>
      <h3 className="mb-1 text-2xl leading-[26px] font-light">{title}</h3>
      {children}
    </section>
  );
}

const phones = ["+38 (999) 999-99-99", "+38 (999) 999-99-99"];

function ContactCard() {
  return (
    <div className="w-full max-w-[430px] rounded-[10px] bg-[#1f9fb9]/92 px-5 pt-5 pb-[19px] text-white">
      <h2 className="text-[34px] leading-9 font-light">Наши контакты</h2>
      <div className="mt-[19px] mb-[21px] h-[3px] w-[120px] bg-white" />
      <div className="flex flex-col gap-4">
        <ContactGroup title="Офис">
          <p className="flex h-8 items-center gap-2 text-base">
            <LockIcon />
            Украина, г. Киев
          </p>
        </ContactGroup>
        <ContactGroup title="Телефон">
          {phones.map((phone, i) => (
            <a key={i} href="tel:+389999999999" className="flex h-9 items-center gap-[10px] text-lg font-medium">
              <PhoneIcon />
              {phone}
            </a>
          ))}
        </ContactGroup>
        <ContactGroup title="E-mail">
          <a href="#email" className="flex h-9 items-center gap-[10px] text-lg font-medium">
            <MailIcon />
            [email protected]
          </a>
        </ContactGroup>
      </div>
    </div>
  );
}

const links = ["Калькулятор", "Стоимость", "Уборка", "Отзывы", "Контакты"];

export default function App() {
  return (
    <div className="min-h-screen overflow-x-hidden bg-white font-[Roboto,sans-serif] text-[#222]">
      <section className="flex flex-col items-center bg-[#f4f4f4] pt-[77px] pb-[100px] pl-[15px]">
        <h2 className="text-center text-[34px] leading-10 font-light">Отзывы о нашей работе</h2>
        <div className="mt-4 h-[3px] w-[120px] bg-[#239cb0]" />
      </section>

      <section className="grid">
        <CityMap />
        <div className="relative col-start-1 row-start-1 grid grid-cols-2 pt-10 pb-[30px] pl-[13px]">
          <div className="flex justify-end">
            <ContactCard />
          </div>
        </div>
      </section>

      <footer className="mt-px border-t-[5px] border-[#239cb0] pt-[49px] pb-12 pl-[15px] text-center leading-6 font-light">
        <div className="mx-auto max-w-[1140px]">
          <p>
            Украина, г. Киев{" "}
            <a href="tel:+389999999999" className="text-[#337ab7]">+38(999) 999-99-99</a>
          </p>
          <p className="mt-[14px] text-[#999]">© «SELLING-SITES.COM»</p>
          <hr className="mt-[15px] border-[#ccc]" />
          <nav className="mt-[19px] flex flex-wrap justify-center gap-x-[34px] text-black">
            {links.map((link) => (
              <a key={link} href="#">{link}</a>
            ))}
            <a href="#" className="text-[#aaa]">Политика конфиденциальности</a>
          </nav>
        </div>
      </footer>
    </div>
  );
}
